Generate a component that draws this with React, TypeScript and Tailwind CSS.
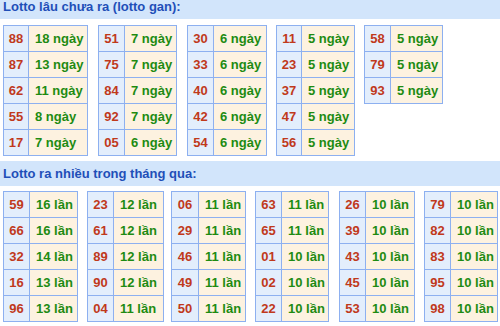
type Row = [string, string];

type Block = {
  rows: Row[];
  numW: string;
  valW: string;
  gap: string;
};

const ganBlocks: Block[] = [
  { numW: 'w-[25px]', valW: 'w-[59px]', gap: '', rows: [['88', '18 ngày'], ['87', '13 ngày'], ['62', '11 ngày'], ['55', '8 ngày'], ['17', '7 ngày']] },
  { numW: 'w-[26px]', valW: 'w-[52px]', gap: 'ml-[10px]', rows: [['51', '7 ngày'], ['75', '7 ngày'], ['84', '7 ngày'], ['92', '7 ngày'], ['05', '6 ngày']] },
  { numW: 'w-[26px]', valW: 'w-[53px]', gap: 'ml-[10px]', rows: [['30', '6 ngày'], ['33', '6 ngày'], ['40', '6 ngày'], ['42', '6 ngày'], ['54', '6 ngày']] },
  { numW: 'w-[25px]', valW: 'w-[53px]', gap: 'ml-[9px]', rows: [['11', '5 ngày'], ['23', '5 ngày'], ['37', '5 ngày'], ['47', '5 ngày'], ['56', '5 ngày']] },
  { numW: 'w-[26px]', valW: 'w-[52px]', gap: 'ml-[9px]', rows: [['58', '5 ngày'], ['79', '5 ngày'], ['93', '5 ngày']] },
];

const topBlocks: Block[] = [
  { numW: 'w-[26px]', valW: 'w-[48px]', gap: '', rows: [['59', '16 lần'], ['66', '16 lần'], ['32', '14 lần'], ['16', '13 lần'], ['96', '13 lần']] },
  { numW: 'w-[26px]', valW: 'w-[50px]', gap: 'ml-[9px]', rows: [['23', '12 lần'], ['61', '12 lần'], ['89', '12 lần'], ['90', '12 lần'], ['04', '11 lần']] },
  { numW: 'w-[27px]', valW: 'w-[47px]', gap: 'ml-[7px]', rows: [['06', '11 lần'], ['29', '11 lần'], ['46', '11 lần'], ['49', '11 lần'], ['50', '11 lần']] },
  { numW: 'w-[26px]', valW: 'w-[47px]', gap: 'ml-[9px]', rows: [['63', '11 lần'], ['65', '11 lần'], ['01', '10 lần'], ['02', '10 lần'], ['22', '10 lần']] },
  { numW: 'w-[26px]', valW: 'w-[49px]', gap: 'ml-[10px]', rows: [['26', '10 lần'], ['39', '10 lần'], ['43', '10 lần'], ['45', '10 lần'], ['53', '10 lần']] },
  { numW: 'w-[26px]', valW: 'w-[47px]', gap: 'ml-[9px]', rows: [['79', '10 lần'], ['82', '10 lần'], ['83', '10 lần'], ['95', '10 lần'], ['98', '10 lần']] },
];

function LotoTable({ block }: { block: Block }) {
  return (
    <div className={`flex flex-col border-l border-t border-[#8db0f0] ${block.gap}`}>
      {block.rows.map(([num, val]) => (
        <div key={num} className="flex h-[26px]">
          <div className={`${block.numW} flex items-center justify-center border-r border-b border-[#8db0f0] bg-[#e3eefc] text-[#c0391b]`}>
            {num}
          </div>
          <div className={`${block.valW} flex items-center pl-[6px] border-r border-b border-[#8db0f0] bg-[#fdf2e0] text-[#1e8b12] whitespace-nowrap`}>
            {val}
          </div>
        </div>
      ))}
    </div>
  );
}

function SectionHeader({ title, extra }: { title: string; extra?: string }) {
  return (
    <div className={`h-[25px] flex items-center px-[3px] bg-[#d2e5fb] text-[#1f4fb8] text-[13px] font-bold ${extra ?? ''}`}>
      {title}
    </div>
  );
}

export default function App() {
  return (
    <div className="w-[500px] h-[326px] overflow-hidden bg-white font-['Liberation_Sans',Arial,sans-serif]">
      <SectionHeader title="Lotto lâu chưa ra (lotto gan):" extra="-mt-[6px]" />
      <div className="flex items-start px-[3px] mt-[6px] text-[13px] font-bold">
        {ganBlocks.map((b, i) => (
          <LotoTable key={i} block={b} />
        ))}
      </div>
      <SectionHeader title="Lotto ra nhiều trong tháng qua:" extra="mt-[5px]" />
      <div className="flex items-start px-[3px] mt-[5px] text-[13px] font-bold">
        {topBlocks.map((b, i) => (
          <LotoTable key={i} block={b} />
        ))}
      </div>
    </div>
  );
}
